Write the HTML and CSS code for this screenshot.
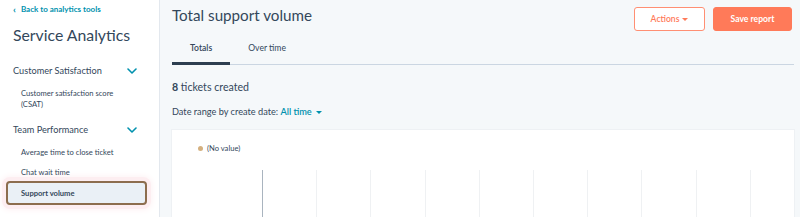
FILE: index.html
```html
<!DOCTYPE html>
<html>
<head>
<meta charset="utf-8">
<link rel="stylesheet" href="styles.css">
</head>
<body>
<div class="app">
  <aside class="sidebar">
    <a class="back"><span class="back-chev">‹</span>Back to analytics tools</a>
    <h1 class="side-title">Service Analytics</h1>
    <div class="group-head first"><span>Customer Satisfaction</span>
      <svg class="chev" width="10" height="6" viewBox="0 0 10 6"><path d="M1 1l4 4 4-4" fill="none" stroke="#0091ae" stroke-width="1.6" stroke-linecap="round" stroke-linejoin="round"/></svg>
    </div>
    <div class="item csat">Customer satisfaction score (CSAT)</div>
    <div class="group-head second"><span>Team Performance</span>
      <svg class="chev" width="10" height="6" viewBox="0 0 10 6"><path d="M1 1l4 4 4-4" fill="none" stroke="#0091ae" stroke-width="1.6" stroke-linecap="round" stroke-linejoin="round"/></svg>
    </div>
    <div class="item avg">Average time to close ticket</div>
    <div class="item chat">Chat wait time</div>
    <div class="item active">Support volume</div>
  </aside>
  <main class="main">
    <div class="header">
      <h2 class="title">Total support volume</h2>
      <div class="actions">
        <button class="btn btn-secondary">Actions <span class="caret"></span></button>
        <button class="btn btn-primary">Save report</button>
      </div>
    </div>
    <div class="tabs">
      <div class="tab active">Totals</div>
      <div class="tab">Over time</div>
    </div>
    <div class="count"><b>8</b> tickets created</div>
    <div class="range">Date range by create date: <a class="link">All time <span class="caret blue"></span></a></div>
    <div class="card">
      <div class="legend"><span class="dot"></span>(No value)</div>
      <div class="grid">
        <span class="gl axis"></span><span class="gl"></span><span class="gl"></span><span class="gl"></span><span class="gl"></span><span class="gl"></span><span class="gl"></span><span class="gl"></span><span class="gl"></span><span class="gl"></span>
      </div>
    </div>
  </main>
</div>
</body>
</html>
```
FILE: styles.css
```css
* { box-sizing: border-box; }
html, body { margin: 0; padding: 0; }
body {
  width: 800px;
  height: 217px;
  overflow: hidden;
  font-family: Lato, "Noto Sans", sans-serif;
  color: #33475b;
  background: #f5f8fa;
}
.app { display: flex; height: 217px; overflow: hidden; }

.sidebar {
  width: 160px;
  flex: none;
  background: #fff;
  border-right: 1px solid #e3e8ee;
  padding-top: 4px;
}
.back {
  display: flex;
  align-items: center;
  gap: 5px;
  padding-left: 13px;
  font-size: 8px;
  font-weight: 700;
  color: #0091ae;
  height: 11px;
  line-height: 11px;
}
.back-chev { font-size: 10px; font-weight: 700; }
.side-title {
  margin: 9px 0 0 13px;
  font-size: 15.8px;
  font-weight: 400;
  line-height: 22px;
  color: #33475b;
}
.group-head {
  display: flex;
  justify-content: space-between;
  align-items: center;
  padding: 0 22px 0 13px;
  font-size: 9.2px;
  height: 20px;
}
.group-head.first { margin-top: 14px; }
.group-head.second { margin-top: 9.5px; }
.chev { margin-top: 1px; }
.item {
  padding-left: 21px;
  padding-right: 14px;
  font-size: 7.6px;
  line-height: 11px;
}
.item.csat { margin-top: 7.5px; padding-right: 40px; }
.item.avg { margin-top: 7.5px; }
.item.chat { margin-top: 9px; }
.item.active {
  margin: 3.5px 12px 0 6px;
  padding: 0 0 0 13px;
  height: 24px;
  line-height: 20px;
  font-weight: 700;
  background: #eaf0f6;
  border: 2px solid #8c6d4e;
  border-radius: 4px;
  box-shadow: 0 0 0 4px #fdeef1, 0 0 6px 5px #fdf2f4;
}

.main {
  flex: 1;
  min-width: 0;
  padding: 7px 6px 0 12px;
  display: flex;
  flex-direction: column;
}
.header {
  display: flex;
  justify-content: space-between;
  align-items: center;
  height: 24px;
}
.title {
  margin: -9px 0 0 0;
  font-size: 15.2px;
  font-weight: 400;
  line-height: 20px;
}
.actions { display: flex; gap: 8px; margin-right: 2px; }
.btn {
  height: 24px;
  border-radius: 3px;
  font-family: inherit;
  font-size: 8.6px;
  font-weight: 700;
  padding: 0;
  display: flex;
  align-items: center;
  justify-content: center;
}
.btn-secondary {
  width: 71px;
  background: #fff;
  border: 1px solid #ff8f73;
  color: #ff7a59;
  font-weight: 600;
}
.btn-primary {
  width: 79px;
  background: #ff7a59;
  border: 1px solid #ff7a59;
  color: #fff;
}
.caret {
  display: inline-block;
  width: 0; height: 0;
  border-left: 3px solid transparent;
  border-right: 3px solid transparent;
  border-top: 3px solid #ff7a59;
  margin-left: 3px;
  vertical-align: middle;
}
.caret.blue { border-top-color: #0091ae; margin-left: 2px; }

.tabs {
  display: flex;
  margin-top: 2px;
  border-bottom: 1px solid #cbd6e2;
  height: 32px;
}
.tab {
  padding: 0 18px;
  font-size: 8.6px;
  line-height: 31px;
  height: 32px;
}
.tab.active {
  font-weight: 600;
  border-bottom: 3px solid #2d3e50;
}
.count {
  margin-top: 15px;
  font-size: 10.6px;
  line-height: 14px;
}
.count b { font-weight: 700; }
.range {
  margin-top: 12px;
  font-size: 9.2px;
  line-height: 12px;
}
.link { color: #0091ae; font-weight: 600; }
.card {
  margin-top: 12px;
  flex: 1;
  min-height: 0;
  overflow: hidden;
  background: #fff;
  box-shadow: 0 0 0 1px #eef1f4;
  padding: 13px 0 0 26px;
}
.legend {
  display: flex;
  align-items: center;
  font-size: 7.6px;
  line-height: 10px;
  color: #33475b;
}
.dot {
  width: 5px; height: 5px;
  border-radius: 50%;
  background: #d4b07f;
  margin-right: 4px;
}
.grid {
  display: flex;
  margin-top: 17px;
  margin-left: 64px;
  height: 60px;
}
.gl {
  flex: none;
  width: 1px;
  height: 60px;
  background: #eff1f3;
  margin-right: 53.2px;
}
.gl.axis { background: #a9b4bf; }
```
